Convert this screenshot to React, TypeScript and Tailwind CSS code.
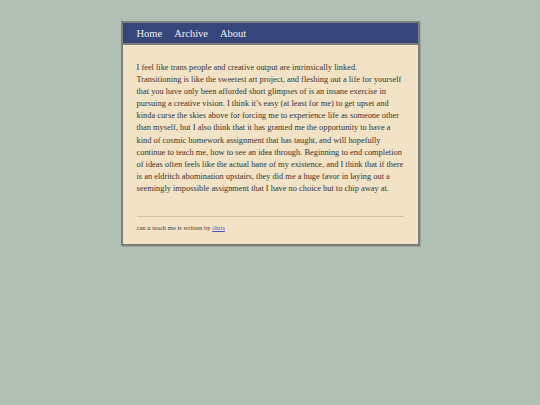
const lines = [
  'I feel like trans people and creative output are intrinsically linked.',
  'Transitioning is like the sweetest art project, and fleshing out a life for yourself',
  'that you have only been afforded short glimpses of is an insane exercise in',
  'pursuing a creative vision. I think it\u2019s easy (at least for me) to get upset and',
  'kinda curse the skies above for forcing me to experience life as someone other',
  'than myself, but I also think that it has granted me the opportunity to have a',
  'kind of cosmic homework assignment that has taught, and will hopefully',
  'continue to teach me, how to see an idea through. Beginning to end completion',
  'of ideas often feels like the actual bane of my existence, and I think that if there',
  'is an eldritch abomination upstairs, they did me a huge favor in laying out a',
  'seemingly impossible assignment that I have no choice but to chip away at.',
]

export default function App() {
  return (
    <div className="min-h-[405px] w-full bg-[#b1bfb5] pt-[21px]" style={{ fontFamily: '"Liberation Serif", serif' }}>
      <div className="mx-auto w-[299px] border-2 border-[#7d7d7a] bg-[#f2e3c6] shadow-[1px_1px_0_#9aa69d]">
        {/* Nav */}
        <nav className="flex h-[22px] items-center gap-[12px] border-b-2 border-[#7d7d7a] bg-[#36467a] px-[14px] pt-[2px]">
          <a className="text-[10.5px] text-[#eef0f6]">Home</a>
          <a className="text-[10.5px] text-[#eef0f6]">Archive</a>
          <a className="text-[10.5px] text-[#eef0f6]">About</a>
        </nav>

        <div className="px-[14px] pt-[17px] pb-[12px]">
          <p className="text-[8.4px] leading-[12.1px] text-[#38332e]">
            {lines.map((l, i) => (
              <span key={i} className="block whitespace-nowrap">
                {l}
              </span>
            ))}
          </p>

          <div className="mt-[21px] border-t border-[#d3c4a3] pt-[6px]">
            <p className="text-[6.6px] leading-[9px] text-[#45403a]">
              can u teach me is written by <a className="text-[#5050cc] underline">chris</a>
            </p>
          </div>
        </div>
      </div>
    </div>
  )
}
